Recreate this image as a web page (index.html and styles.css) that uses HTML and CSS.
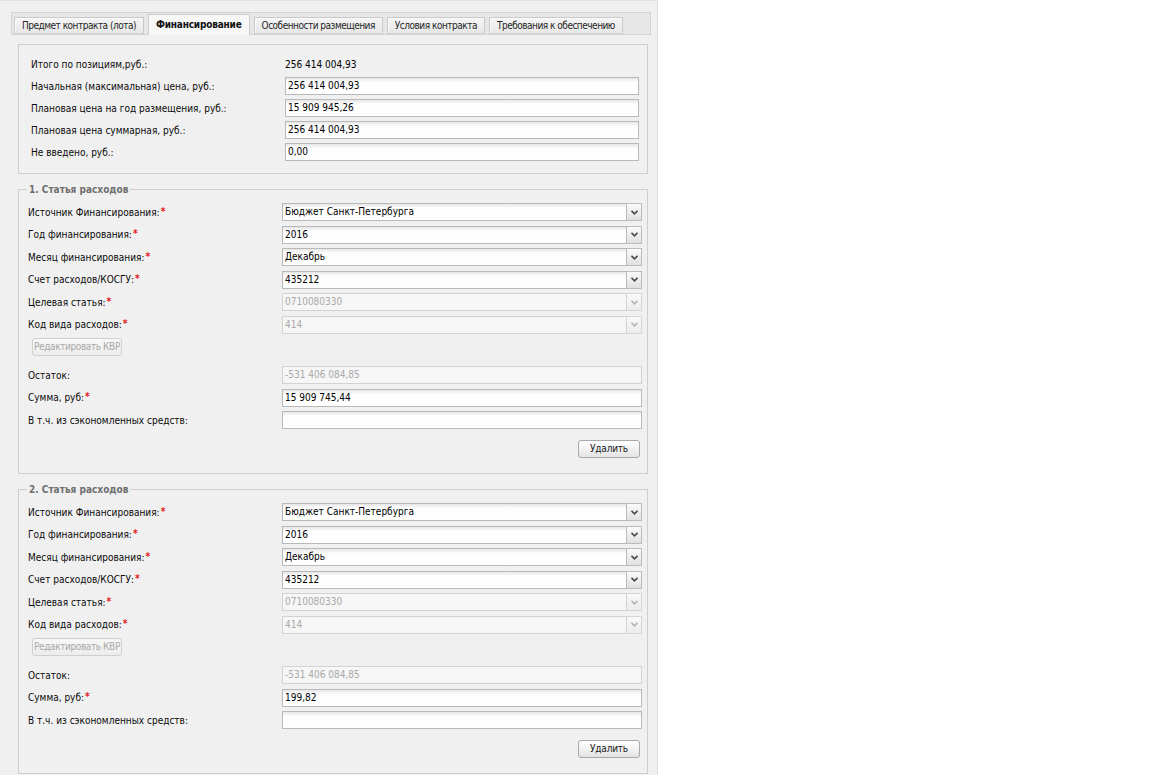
FILE: index.html
```html
<!DOCTYPE html>
<html lang="ru">
<head>
<meta charset="utf-8">
<title>Финансирование</title>
<link rel="stylesheet" href="styles.css">
</head>
<body>
<div class="page">
  <div class="tabbar">
    <div class="tab">Предмет контракта (лота)</div>
    <div class="tab active">Финансирование</div>
    <div class="tab">Особенности размещения</div>
    <div class="tab">Условия контракта</div>
    <div class="tab">Требования к обеспечению</div>
  </div>

  <div class="summary">
    <div class="row"><span class="lbl">Итого по позициям,руб.:</span><span class="plain">256 414 004,93</span></div>
    <div class="row"><span class="lbl">Начальная (максимальная) цена, руб.:</span><div class="field">256 414 004,93</div></div>
    <div class="row"><span class="lbl">Плановая цена на год размещения, руб.:</span><div class="field">15 909 945,26</div></div>
    <div class="row"><span class="lbl">Плановая цена суммарная, руб.:</span><div class="field">256 414 004,93</div></div>
    <div class="row"><span class="lbl">Не введено, руб.:</span><div class="field">0,00</div></div>
  </div>

  <fieldset class="fs">
    <legend>1. Статья расходов</legend>
    <div class="rows">
      <div class="row"><span class="lbl">Источник Финансирования:<span class="req">*</span></span><div class="combo"><div class="field">Бюджет Санкт-Петербурга</div><div class="trig"><svg width="7" height="5" viewBox="0 0 7 5"><path d="M0.5 0.8 L3.5 3.8 L6.5 0.8" fill="none" stroke="#4a4a4a" stroke-width="1.6"/></svg></div></div></div>
      <div class="row"><span class="lbl">Год финансирования:<span class="req">*</span></span><div class="combo"><div class="field">2016</div><div class="trig"><svg width="7" height="5" viewBox="0 0 7 5"><path d="M0.5 0.8 L3.5 3.8 L6.5 0.8" fill="none" stroke="#4a4a4a" stroke-width="1.6"/></svg></div></div></div>
      <div class="row"><span class="lbl">Месяц финансирования:<span class="req">*</span></span><div class="combo"><div class="field">Декабрь</div><div class="trig"><svg width="7" height="5" viewBox="0 0 7 5"><path d="M0.5 0.8 L3.5 3.8 L6.5 0.8" fill="none" stroke="#4a4a4a" stroke-width="1.6"/></svg></div></div></div>
      <div class="row"><span class="lbl">Счет расходов/КОСГУ:<span class="req">*</span></span><div class="combo"><div class="field">435212</div><div class="trig"><svg width="7" height="5" viewBox="0 0 7 5"><path d="M0.5 0.8 L3.5 3.8 L6.5 0.8" fill="none" stroke="#4a4a4a" stroke-width="1.6"/></svg></div></div></div>
      <div class="row"><span class="lbl">Целевая статья:<span class="req">*</span></span><div class="combo disabled"><div class="field">0710080330</div><div class="trig"><svg width="7" height="5" viewBox="0 0 7 5"><path d="M0.5 0.8 L3.5 3.8 L6.5 0.8" fill="none" stroke="#b4b4b4" stroke-width="1.6"/></svg></div></div></div>
      <div class="row"><span class="lbl">Код вида расходов:<span class="req">*</span></span><div class="combo disabled"><div class="field">414</div><div class="trig"><svg width="7" height="5" viewBox="0 0 7 5"><path d="M0.5 0.8 L3.5 3.8 L6.5 0.8" fill="none" stroke="#b4b4b4" stroke-width="1.6"/></svg></div></div></div>
      <div class="btnrow"><span class="btn btn-kvr disabled">Редактировать КВР</span></div>
      <div class="row row-gap"><span class="lbl">Остаток:</span><div class="field disabled">-531 406 084,85</div></div>
      <div class="row"><span class="lbl">Сумма, руб:<span class="req">*</span></span><div class="field">15 909 745,44</div></div>
      <div class="row"><span class="lbl">В т.ч. из сэкономленных средств:</span><div class="field"></div></div>
      <div class="actions"><span class="btn btn-del">Удалить</span></div>
    </div>
  </fieldset>

  <fieldset class="fs">
    <legend>2. Статья расходов</legend>
    <div class="rows">
      <div class="row"><span class="lbl">Источник Финансирования:<span class="req">*</span></span><div class="combo"><div class="field">Бюджет Санкт-Петербурга</div><div class="trig"><svg width="7" height="5" viewBox="0 0 7 5"><path d="M0.5 0.8 L3.5 3.8 L6.5 0.8" fill="none" stroke="#4a4a4a" stroke-width="1.6"/></svg></div></div></div>
      <div class="row"><span class="lbl">Год финансирования:<span class="req">*</span></span><div class="combo"><div class="field">2016</div><div class="trig"><svg width="7" height="5" viewBox="0 0 7 5"><path d="M0.5 0.8 L3.5 3.8 L6.5 0.8" fill="none" stroke="#4a4a4a" stroke-width="1.6"/></svg></div></div></div>
      <div class="row"><span class="lbl">Месяц финансирования:<span class="req">*</span></span><div class="combo"><div class="field">Декабрь</div><div class="trig"><svg width="7" height="5" viewBox="0 0 7 5"><path d="M0.5 0.8 L3.5 3.8 L6.5 0.8" fill="none" stroke="#4a4a4a" stroke-width="1.6"/></svg></div></div></div>
      <div class="row"><span class="lbl">Счет расходов/КОСГУ:<span class="req">*</span></span><div class="combo"><div class="field">435212</div><div class="trig"><svg width="7" height="5" viewBox="0 0 7 5"><path d="M0.5 0.8 L3.5 3.8 L6.5 0.8" fill="none" stroke="#4a4a4a" stroke-width="1.6"/></svg></div></div></div>
      <div class="row"><span class="lbl">Целевая статья:<span class="req">*</span></span><div class="combo disabled"><div class="field">0710080330</div><div class="trig"><svg width="7" height="5" viewBox="0 0 7 5"><path d="M0.5 0.8 L3.5 3.8 L6.5 0.8" fill="none" stroke="#b4b4b4" stroke-width="1.6"/></svg></div></div></div>
      <div class="row"><span class="lbl">Код вида расходов:<span class="req">*</span></span><div class="combo disabled"><div class="field">414</div><div class="trig"><svg width="7" height="5" viewBox="0 0 7 5"><path d="M0.5 0.8 L3.5 3.8 L6.5 0.8" fill="none" stroke="#b4b4b4" stroke-width="1.6"/></svg></div></div></div>
      <div class="btnrow"><span class="btn btn-kvr disabled">Редактировать КВР</span></div>
      <div class="row row-gap"><span class="lbl">Остаток:</span><div class="field disabled">-531 406 084,85</div></div>
      <div class="row"><span class="lbl">Сумма, руб:<span class="req">*</span></span><div class="field">199,82</div></div>
      <div class="row"><span class="lbl">В т.ч. из сэкономленных средств:</span><div class="field"></div></div>
      <div class="actions"><span class="btn btn-del">Удалить</span></div>
    </div>
  </fieldset>
</div>
</body>
</html>
```

FILE: styles.css
```css
* { box-sizing: border-box; }
html, body { margin: 0; padding: 0; background: #fff; }
body {
  font-family: "DejaVu Sans Condensed", "Liberation Sans", Arial, sans-serif;
  font-size: 10px;
  color: #000;
}
.page {
  width: 658px;
  min-height: 775px;
  background: #f0f0f0;
  border-top: 1px solid #e2e2e2;
  border-right: 1px solid #dedede;
  padding-top: 11px;
  overflow: hidden;
}

/* tabs */
.tabbar {
  margin-left: 11px;
  width: 640px;
  height: 23px;
  border: 1px solid #d3d3d3;
  background: #e7e7e7;
  display: flex;
  align-items: flex-end;
  gap: 4px;
  padding: 0 2px;
}
.tab {
  height: 17px;
  line-height: 15px;
  padding: 0 7px;
  border: 1px solid #c8c8c8;
  border-bottom-color: #d3d3d3;
  background: linear-gradient(#f4f4f4, #e8e8e8);
  box-shadow: inset 1px 1px 0 #fbfbfb;
  color: #262626;
  white-space: nowrap;
  letter-spacing: -0.5px;
}
.tab.active {
  height: 21px;
  line-height: 19px;
  margin-bottom: -1px;
  background: #f7f7f7;
  border-color: #cdcdcd;
  border-bottom: none;
  box-shadow: none;
  font-weight: bold;
  color: #111;
  letter-spacing: -0.2px;
}

/* summary panel */
.summary {
  margin: 9px 0 0 18px;
  width: 630px;
  border: 1px solid #cecece;
  padding: 10px 8px 12px 12px;
  display: flex;
  flex-direction: column;
  gap: 4px;
}
.row {
  display: flex;
  align-items: center;
  height: 18px;
}
.lbl {
  width: 254px;
  flex: none;
  white-space: nowrap;
  color: #0a0a0a;
}
.req {
  color: #e01818;
  font-weight: bold;
  margin-left: 1px;
  position: relative;
  top: -1px;
}
.plain { padding-left: 0; }

.field {
  flex: 1;
  height: 18px;
  line-height: 16px;
  padding: 0 2px;
  border: 1px solid #b9b9b9;
  background: linear-gradient(#e6e6e6 0, #fdfdfd 4px, #fff 100%);
  white-space: nowrap;
  overflow: hidden;
}
.field.disabled {
  border-color: #d2d2d2;
  background: #f6f6f6;
  color: #a9a9a9;
}

.combo {
  flex: 1;
  display: flex;
  height: 18px;
}
.trig {
  width: 15px;
  flex: none;
  height: 18px;
  border: 1px solid #bcbcbc;
  border-left: none;
  background: linear-gradient(#fbfbfb, #e0e0e0);
  display: flex;
  align-items: center;
  justify-content: center;
}
.combo.disabled .field {
  border-color: #d2d2d2;
  background: #f6f6f6;
  color: #a9a9a9;
}
.combo.disabled .trig {
  border-color: #d6d6d6;
  background: linear-gradient(#f9f9f9, #ececec);
}

/* fieldsets */
.fs {
  margin: 9px 0 0 18px;
  width: 630px;
  min-width: 0;
  border: 1px solid #cecece;
  padding: 7px 5px 15px 9px;
}
.fs legend {
  margin-left: -1px;
  padding: 0 2px;
  font-weight: bold;
  color: #6f6f6f;
  line-height: 13px;
  font-size: 10px;
}
.rows {
  display: flex;
  flex-direction: column;
  gap: 4.5px;
}
.row-gap { margin-top: 5.5px; }
.btnrow { display: flex; height: 18px; }
.actions {
  display: flex;
  justify-content: flex-end;
  margin-top: 6.5px;
  padding-right: 2px;
}

.btn {
  display: inline-block;
  height: 18px;
  line-height: 16px;
  text-align: center;
  border: 1px solid #a8a8a8;
  border-radius: 3px;
  background: linear-gradient(#ffffff, #e4e4e4);
  color: #1a1a1a;
  white-space: nowrap;
  letter-spacing: -0.2px;
}
.btn-del { width: 62px; }
.btn-kvr { width: 90px; margin-left: 4px; letter-spacing: -0.4px; }
.btn.disabled {
  border-color: #cfcfcf;
  background: linear-gradient(#f8f8f8, #ededed);
  color: #a9a9a9;
}
```
